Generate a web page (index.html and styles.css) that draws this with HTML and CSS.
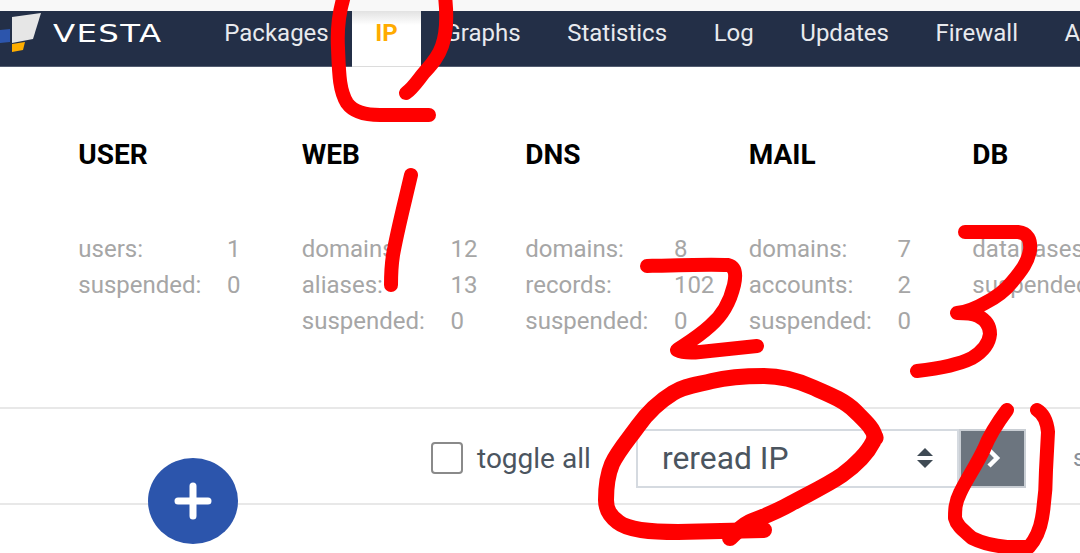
FILE: index.html
```html
<!DOCTYPE html>
<html lang="en">
<head>
  <meta charset="UTF-8">
  <title>Vesta</title>
  <link rel="stylesheet" href="styles.css">
</head>
<body>
  <div class="top-strip"></div>
  <div class="nav">
    <div class="logo">
      <svg class="logo-mark" width="42" height="42" viewBox="0 0 42 42">
        <polygon points="12,6 41,2 33,28 12,32" fill="#e6e6e6"/>
        <polygon points="0,19 10,18 10,31 0,32" fill="#2c55ac"/>
        <polygon points="12,33 25,31 23,39 12,41" fill="#ffae00"/>
      </svg>
      <span class="logo-text">VESTA</span>
    </div>
    <div class="nav-item">Packages</div>
    <div class="nav-item active">IP</div>
    <div class="nav-item">Graphs</div>
    <div class="nav-item">Statistics</div>
    <div class="nav-item">Log</div>
    <div class="nav-item">Updates</div>
    <div class="nav-item">Firewall</div>
    <div class="nav-item">Apps</div>
  </div>

  <div class="stats">
    <div class="stat-col">
      <div class="stat-title">USER</div>
      <div class="stat-row"><span class="stat-label">users:</span><span>1</span></div>
      <div class="stat-row"><span class="stat-label">suspended:</span><span>0</span></div>
    </div>
    <div class="stat-col">
      <div class="stat-title">WEB</div>
      <div class="stat-row"><span class="stat-label">domains:</span><span>12</span></div>
      <div class="stat-row"><span class="stat-label">aliases:</span><span>13</span></div>
      <div class="stat-row"><span class="stat-label">suspended:</span><span>0</span></div>
    </div>
    <div class="stat-col">
      <div class="stat-title">DNS</div>
      <div class="stat-row"><span class="stat-label">domains:</span><span>8</span></div>
      <div class="stat-row"><span class="stat-label">records:</span><span>102</span></div>
      <div class="stat-row"><span class="stat-label">suspended:</span><span>0</span></div>
    </div>
    <div class="stat-col">
      <div class="stat-title">MAIL</div>
      <div class="stat-row"><span class="stat-label">domains:</span><span>7</span></div>
      <div class="stat-row"><span class="stat-label">accounts:</span><span>2</span></div>
      <div class="stat-row"><span class="stat-label">suspended:</span><span>0</span></div>
    </div>
    <div class="stat-col">
      <div class="stat-title">DB</div>
      <div class="stat-row"><span class="stat-label">databases:</span><span>7</span></div>
      <div class="stat-row"><span class="stat-label">suspended:</span><span>0</span></div>
    </div>
  </div>

  <div class="toolbar">
    <div class="checkbox"></div>
    <div class="toggle-label">toggle all</div>
    <div class="select">
      <span>reread IP</span>
      <svg width="18" height="22" viewBox="0 0 18 22">
        <polygon points="9,1 17,9 1,9" fill="#3f4a54"/>
        <polygon points="1,13 17,13 9,21" fill="#3f4a54"/>
      </svg>
    </div>
    <div class="apply">
      <svg width="18" height="22" viewBox="0 0 18 22">
        <path d="M5 3l8 8-8 8" fill="none" stroke="#fff" stroke-width="4.5"/>
      </svg>
    </div>
    <div class="search-label">search</div>
  </div>

  <div class="add-btn">
    <svg width="38" height="38" viewBox="0 0 38 38">
      <path d="M19 4v30M4 19h30" stroke="#fff" stroke-width="7" stroke-linecap="round"/>
    </svg>
  </div>

  <svg class="marks" width="1080" height="553" viewBox="0 0 1080 553">
    <g fill="none" stroke="#ff0000" stroke-width="14" stroke-linecap="round" stroke-linejoin="round">
      <path d="M344 -4C339 12 337 30 338 48C339 72 339 90 347 103C354 113 368 115 380 115L429 115"/>
      <path d="M445 -4C447 14 447 32 442 46C438 58 430 66 423 74C416 83 412 89 406 93"/>
      <path d="M411 175C404 205 397 232 393 255C391 268 391 276 391 285"/>
      <path d="M647 266C680 265 710 264 728 265C736 267 736 276 734 285C730 302 722 316 710 326C698 337 686 344 677 350C683 353 690 353 700 352L757 346"/>
      <path d="M965 232L1018 232C1028 233 1031 240 1030 250C1028 262 1022 270 1012 282C1004 292 995 298 985 303C975 309 965 312 957 313C966 313 972 313 978 316C986 320 990 326 990 334C989 345 982 352 972 358C958 365 935 369 917 371"/>
      <path class="mark-wide" d="M875 437C873 428 866 422 855 411C844 400 828 394 812 387C796 380 780 376 764 376C744 376 728 377 712 381C696 385 684 386 673 393C660 401 648 412 638 426C628 440 618 451 612 464C607 476 606 490 606 500C606 510 610 516 618 522C628 530 650 532 678 532L764 530"/>
      <path class="mark-wide" d="M730 538C736 532 742 526 750 522C765 516 776 512 790 504C808 494 826 486 842 475C856 465 868 452 873 442C876 434 876 440 875 437"/>
      <path d="M1007 410C998 422 990 434 984 449C976 466 966 480 960 493C955 503 955 510 955 518C957 526 963 530 972 538C984 544 996 546 1007 547L1029 547C1035 540 1040 530 1042 518C1045 500 1046 490 1046 470L1048 432C1047 422 1044 414 1037 410"/>
    </g>
  </svg>
</body>
</html>
```

FILE: styles.css
```css
* {
  box-sizing: border-box;
}
html, body {
  height: 553px;
  overflow: hidden;
}
body {
  margin: 0;
  background-color: #fff;
  font-family: Roboto, "Liberation Sans", sans-serif;
  position: relative;
}

.top-strip {
  height: 11px;
  background-color: #f8f8f8;
}

.nav {
  display: flex;
  height: 56px;
  background-color: #232f47;
  border-bottom: 1px solid #525c70;
  white-space: nowrap;
}
.logo {
  flex: 0 0 201px;
  display: flex;
  align-items: flex-start;
}
.logo-mark {
  flex: none;
}
.logo-text {
  font-family: "DejaVu Sans", sans-serif;
  font-size: 24px;
  line-height: 46px;
  color: #fff;
  letter-spacing: 1px;
  margin-left: 11px;
  transform: scaleX(1.35);
  transform-origin: left center;
}
.nav-item {
  flex: none;
  padding: 0 23.3px;
  font-size: 24px;
  line-height: 44px;
  color: #e8eaee;
}
.nav-item.active {
  color: #ffab00;
  font-weight: 700;
  padding: 0 23.3px;
  background: linear-gradient(#e2e2e2, #fff 14px);
  border-bottom: 1px solid #dcdcdc;
  height: 56px;
}

.stats {
  display: flex;
  height: 340px;
  padding: 70px 0 0 78.3px;
  white-space: nowrap;
}
.stat-col {
  flex: 0 0 223.5px;
}
.stat-title {
  font-size: 28px;
  font-weight: 700;
  line-height: 36px;
  color: #000;
  margin-bottom: 58px;
}
.stat-row {
  display: flex;
  font-size: 24px;
  line-height: 36px;
  color: #a6a6a6;
}
.stat-label {
  flex: 0 0 148.6px;
}

.toolbar {
  display: flex;
  align-items: center;
  height: 98px;
  padding: 4px 0 0 431px;
  border-top: 2px solid #e8e8e8;
  border-bottom: 2px solid #e8e8e8;
  color: #4b555f;
  white-space: nowrap;
}
.checkbox {
  flex: none;
  width: 32px;
  height: 32px;
  border: 2px solid #8a8a8a;
  border-radius: 4px;
}
.toggle-label {
  flex: none;
  width: 159px;
  margin-left: 14px;
  font-size: 28px;
}
.select {
  flex: none;
  display: flex;
  justify-content: space-between;
  align-items: center;
  width: 323px;
  height: 59px;
  padding: 0 23px 0 24px;
  border: 2px solid #d5dae0;
  font-size: 31.8px;
}
.apply {
  flex: none;
  display: flex;
  justify-content: center;
  align-items: center;
  width: 67px;
  height: 59px;
  background-color: #6c757f;
  border: 2px solid #c9ced4;
}
.search-label {
  flex: none;
  margin-left: 47px;
  font-size: 24px;
  color: #8a9098;
}

.add-btn {
  position: absolute;
  left: 148px;
  top: 458px;
  width: 90px;
  height: 86px;
  border-radius: 50%;
  background-color: #2c55ac;
  display: flex;
  justify-content: center;
  align-items: center;
}

.marks {
  position: absolute;
  left: 0;
  top: 0;
}
.mark-wide {
  stroke-width: 16;
}
```
